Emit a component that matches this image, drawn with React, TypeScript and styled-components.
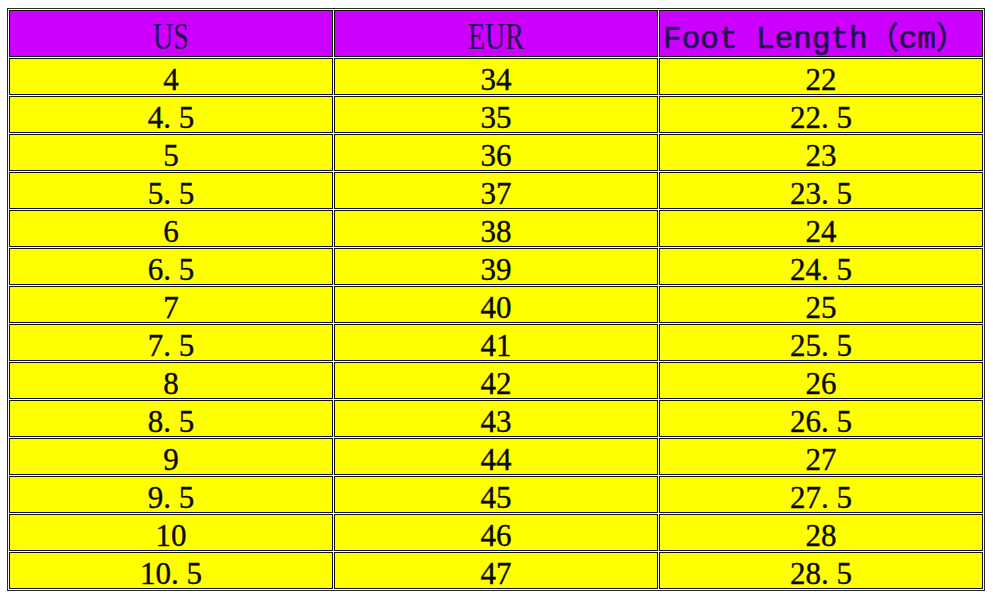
import styled, { createGlobalStyle } from 'styled-components';

const GlobalStyle = createGlobalStyle`
  html, body {
    margin: 0;
    padding: 0;
    background: #ffffff;
  }
  body {
    font-family: "Liberation Serif", "Noto Sans CJK SC", serif;
  }
`;

// 바깥 여백
const Page = styled.div`
  padding: 8px 0 0 7px;
`;

// 표 전체 (border + 1px cellspacing)
const SizeTable = styled.div`
  display: inline-grid;
  grid-template-columns: repeat(3, 324px);
  grid-template-rows: 47px repeat(14, 37px);
  gap: 1px;
  padding: 1px;
  border: 1px solid #2a2a2a;
  background: #ffffff;
`;

const Cell = styled.div<{ $head?: boolean }>`
  box-sizing: border-box;
  display: flex;
  align-items: center;
  justify-content: center;
  border: 1px solid #111111;
  background: ${(p) => (p.$head ? '#cc00ff' : '#ffff00')};
  color: ${(p) => (p.$head ? '#22104f' : '#0a0a0a')};
  padding-top: ${(p) => (p.$head ? '6px' : '5px')};
  white-space: nowrap;
  overflow: hidden;
`;

// US, EUR 헤더 글자 (세로로 긴 세리프)
const HeadLabel = styled.span`
  display: inline-block;
  font-family: "Liberation Serif", serif;
  font-size: 28px;
  line-height: 1;
  transform: scaleY(1.35);
`;

const HeadMono = styled.span`
  font-family: "Liberation Mono", "Noto Sans CJK SC", monospace;
  font-size: 31px;
  line-height: 1;
  margin: 6px 12px 0 0;
  -webkit-text-stroke: 0.6px #22104f;
`;

const Num = styled.span`
  font-family: "Liberation Serif", serif;
  font-size: 31px;
  line-height: 1;
  -webkit-text-stroke: 0.35px #0a0a0a;
`;

// 전각처럼 넓은 소수점
const Dot = styled.span`
  display: inline-block;
  width: 0.5em;
  text-align: left;
`;

const rows: [string, string, string][] = [
  ['4', '34', '22'],
  ['4.5', '35', '22.5'],
  ['5', '36', '23'],
  ['5.5', '37', '23.5'],
  ['6', '38', '24'],
  ['6.5', '39', '24.5'],
  ['7', '40', '25'],
  ['7.5', '41', '25.5'],
  ['8', '42', '26'],
  ['8.5', '43', '26.5'],
  ['9', '44', '27'],
  ['9.5', '45', '27.5'],
  ['10', '46', '28'],
  ['10.5', '47', '28.5'],
];

const Value = ({ text }: { text: string }) => {
  const [whole, frac] = text.split('.');
  return (
    <Num>
      {whole}
      {frac !== undefined && (
        <>
          <Dot>.</Dot>
          {frac}
        </>
      )}
    </Num>
  );
};

const App = () => {
  return (
    <Page>
      <GlobalStyle />
      <SizeTable>
        <Cell $head>
          <HeadLabel>US</HeadLabel>
        </Cell>
        <Cell $head>
          <HeadLabel>EUR</HeadLabel>
        </Cell>
        <Cell $head>
          <HeadMono>Foot Length（cm）</HeadMono>
        </Cell>
        {rows.map((r) =>
          r.map((v, i) => (
            <Cell key={r[0] + '-' + i}>
              <Value text={v} />
            </Cell>
          ))
        )}
      </SizeTable>
    </Page>
  );
};

export default App;
